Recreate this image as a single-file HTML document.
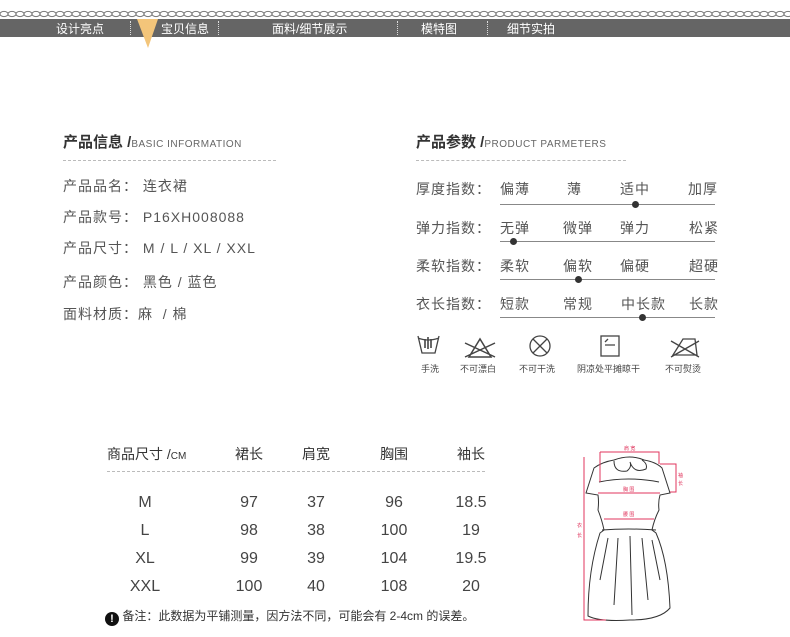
<!DOCTYPE html><html><head><meta charset="utf-8"><style>
body{margin:0;width:790px;height:637px;background:#fff;position:relative;overflow:hidden;font-family:"Liberation Sans","Noto Sans CJK SC",sans-serif;color:#555}
.a{position:absolute;white-space:nowrap}
.nav{position:absolute;top:19px;left:0;width:790px;height:18px;background:#656565}
.nav span{position:absolute;top:1px;font-size:12px;color:#fff}
.sep{position:absolute;top:2px;height:14px;border-left:1px dotted #ddd}
.t{font-size:15px;font-weight:bold;color:#333}
.t small{font-size:10px;font-weight:normal;color:#666;letter-spacing:.5px}
.r{font-size:14px;color:#555;letter-spacing:1px}
.dash{position:absolute;height:0;border-top:1px dashed #bbb}
.ln{position:absolute;left:500px;width:215px;height:1px;background:#888}
.dot{position:absolute;width:7px;height:7px;border-radius:50%;background:#333}
.ic{position:absolute;top:362px;font-size:9px;color:#444}
.tb{font-size:16px;color:#444;text-align:center;width:60px}
</style></head><body>
<svg class="a" style="left:0;top:10px" width="790" height="8"><defs><pattern id="p" width="8" height="8" patternUnits="userSpaceOnUse"><ellipse cx="4" cy="4" rx="4" ry="2.6" fill="none" stroke="#777" stroke-width="1"/></pattern></defs><rect width="790" height="8" fill="url(#p)"/></svg>
<div class="nav">
<span style="left:56px">设计亮点</span><div class="sep" style="left:130px"></div>
<span style="left:161px">宝贝信息</span><div class="sep" style="left:218px"></div>
<span style="left:272px">面料/细节展示</span><div class="sep" style="left:397px"></div>
<span style="left:421px">模特图</span><div class="sep" style="left:487px"></div>
<span style="left:507px">细节实拍</span></div>
<svg class="a" style="left:136px;top:19px" width="24" height="30"><polygon points="1,0 22,0 12,29" fill="#f3c57a"/></svg>

<div class="a t" style="left:63px;top:131px">产品信息 /<small>BASIC INFORMATION</small></div>
<div class="dash" style="left:63px;top:160px;width:213px"></div>
<div class="a r" style="left:63px;top:176px">产品品名： 连衣裙</div>
<div class="a r" style="left:63px;top:207px">产品款号： P16XH008088</div>
<div class="a r" style="left:63px;top:238px">产品尺寸： M / L / XL / XXL</div>
<div class="a r" style="left:63px;top:272px">产品颜色： 黑色 / 蓝色</div>
<div class="a r" style="left:63px;top:304px">面料材质：麻 &nbsp;/ 棉</div>

<div class="a t" style="left:416px;top:131px">产品参数 /<small>PRODUCT PARMETERS</small></div>
<div class="dash" style="left:416px;top:160px;width:210px"></div>
<div class="a r" style="left:416px;top:179px">厚度指数：</div>
<div class="a r" style="left:500px;top:179px">偏薄</div><div class="a r" style="left:567px;top:179px">薄</div><div class="a r" style="left:620px;top:179px">适中</div><div class="a r" style="left:688px;top:179px">加厚</div>
<div class="ln" style="top:204px"></div><div class="dot" style="left:632px;top:201px"></div>
<div class="a r" style="left:416px;top:218px">弹力指数：</div>
<div class="a r" style="left:500px;top:218px">无弹</div><div class="a r" style="left:563px;top:218px">微弹</div><div class="a r" style="left:620px;top:218px">弹力</div><div class="a r" style="left:689px;top:218px">松紧</div>
<div class="ln" style="top:241px"></div><div class="dot" style="left:510px;top:238px"></div>
<div class="a r" style="left:416px;top:256px">柔软指数：</div>
<div class="a r" style="left:500px;top:256px">柔软</div><div class="a r" style="left:563px;top:256px">偏软</div><div class="a r" style="left:620px;top:256px">偏硬</div><div class="a r" style="left:689px;top:256px">超硬</div>
<div class="ln" style="top:279px"></div><div class="dot" style="left:575px;top:276px"></div>
<div class="a r" style="left:416px;top:294px">衣长指数：</div>
<div class="a r" style="left:500px;top:294px">短款</div><div class="a r" style="left:563px;top:294px">常规</div><div class="a r" style="left:621px;top:294px">中长款</div><div class="a r" style="left:689px;top:294px">长款</div>
<div class="ln" style="top:317px"></div><div class="dot" style="left:639px;top:314px"></div>

<svg class="a" style="left:415px;top:333px" width="310" height="28" fill="none" stroke="#444" stroke-width="1.3">
<path d="M3 3 L7 20 H20 L24 3 M3 5 Q13 9 24 5"/><path d="M10 6 V15 M13 4 V16 M16 6 V15" stroke-width="1.6"/>
<path d="M54 24 L65 6 L76 24 Z M50 10 L80 24 M80 10 L50 24" stroke-width="1.5"/>
<circle cx="125" cy="13" r="10"/><path d="M118 6 L132 20 M132 6 L118 20"/>
<rect x="186" y="3" width="18" height="20"/><path d="M190 12 H200 M190 9 L193 6"/>
<path d="M258 22 L268 6 H280 L282 22 Z M256 8 L284 24 M284 8 L256 24"/>
</svg>
<div class="ic" style="left:421px">手洗</div>
<div class="ic" style="left:460px">不可漂白</div>
<div class="ic" style="left:519px">不可干洗</div>
<div class="ic" style="left:577px">阴凉处平摊晾干</div>
<div class="ic" style="left:665px">不可熨烫</div>

<div class="a" style="left:107px;top:444px;font-size:14px;color:#333">商品尺寸 /<span style="font-size:10px">CM</span></div>
<div class="a tb" style="left:219px;top:444px;font-size:14px;color:#333">裙长</div>
<div class="a tb" style="left:286px;top:444px;font-size:14px;color:#333">肩宽</div>
<div class="a tb" style="left:364px;top:444px;font-size:14px;color:#333">胸围</div>
<div class="a tb" style="left:441px;top:444px;font-size:14px;color:#333">袖长</div>
<div class="dash" style="left:107px;top:471px;width:378px"></div>
<div class="a" style="left:115px;top:489px;line-height:28px">
<div style="display:flex"><div class="tb">M</div><div class="tb" style="margin-left:44px">97</div><div class="tb" style="margin-left:7px">37</div><div class="tb" style="margin-left:18px">96</div><div class="tb" style="margin-left:17px">18.5</div></div>
<div style="display:flex"><div class="tb">L</div><div class="tb" style="margin-left:44px">98</div><div class="tb" style="margin-left:7px">38</div><div class="tb" style="margin-left:18px">100</div><div class="tb" style="margin-left:17px">19</div></div>
<div style="display:flex"><div class="tb">XL</div><div class="tb" style="margin-left:44px">99</div><div class="tb" style="margin-left:7px">39</div><div class="tb" style="margin-left:18px">104</div><div class="tb" style="margin-left:17px">19.5</div></div>
<div style="display:flex"><div class="tb">XXL</div><div class="tb" style="margin-left:44px">100</div><div class="tb" style="margin-left:7px">40</div><div class="tb" style="margin-left:18px">108</div><div class="tb" style="margin-left:17px">20</div></div>
</div>
<div class="a" style="left:105px;top:607px;font-size:12px;color:#333"><span style="display:inline-block;width:14px;height:14px;border-radius:50%;background:#111;color:#fff;text-align:center;font-weight:bold;font-size:11px;line-height:14px;vertical-align:-2px">!</span> 备注：此数据为平铺测量，因方法不同，可能会有 2-4cm 的误差。</div>

<svg class="a" style="left:560px;top:430px" width="140" height="200" fill="none" stroke="#333" stroke-width="1">
<path d="M54 30 Q70 24 84 30 Q96 32 102 38 L110 63 L100 65 Q98 72 99 80 Q94 90 92 100 L96 103 Q108 130 110 178 Q100 190 70 190 Q40 192 28 186 Q28 140 40 103 L44 100 Q42 90 38 80 Q39 72 38 65 L26 63 L34 38 Q42 32 54 30 Z"/>
<path d="M54 31 Q54 43 67 41 Q72 37 70 32 Q74 44 86 39 Q88 34 82 30"/>
<path d="M39 52 Q68 46 99 52 M42 100 Q68 98 96 100 M48 108 L40 150 M58 108 L54 175 M70 106 L72 185 M82 108 L88 170 M92 110 L100 150"/>
<g stroke="#e0345c"><path d="M40 22 H99 V34 M40 22 V52 M100 34 H116 V62 H110 M38 63 H100 M44 89 H94 M24 27 V190 H46"/></g>
<g fill="#e0345c" stroke="none" font-size="5"><text x="64" y="20">肩 宽</text><text x="63" y="61">胸 围</text><text x="63" y="86">腰 围</text><text x="118" y="47">袖</text><text x="118" y="55">长</text><text x="17" y="97">衣</text><text x="17" y="107">长</text></g>
</svg>
</body></html>
